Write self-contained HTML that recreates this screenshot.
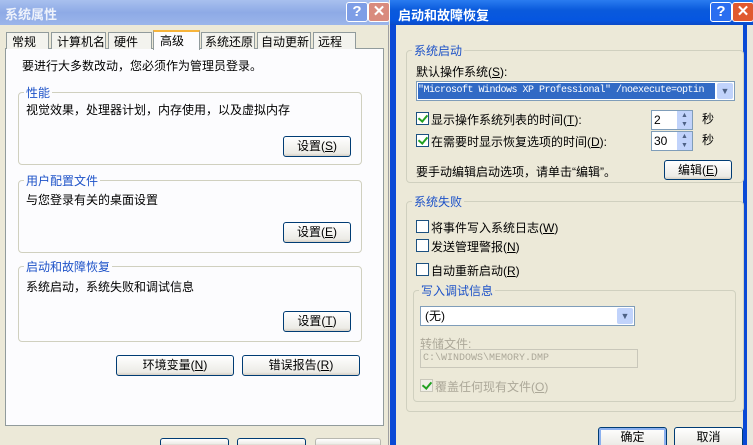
<!DOCTYPE html>
<html><head><meta charset="utf-8"><style>
*{box-sizing:border-box;margin:0;padding:0}
html,body{width:753px;height:445px;overflow:hidden}
body{background:#ece9d8;font-family:"Liberation Sans","Noto Sans CJK SC","WenQuanYi Zen Hei",sans-serif;font-size:12px;color:#000;position:relative}
.a{position:absolute;white-space:nowrap}
.btn{position:absolute;border:1px solid #003c74;border-radius:3px;background:linear-gradient(#fff,#ecebe6 85%,#d6d0c5);text-align:center;font-size:12px;line-height:18px}
.grp{position:absolute;border:1px solid #d0d0bf;border-radius:4px}
.gl{position:absolute;color:#1d52c8;background:inherit;padding:0 2px;font-size:12px;top:-9px;left:5px}
.cb{position:absolute;width:13px;height:13px;border:1px solid #1c5180;background:#fff}
.cb.on::after{content:"";position:absolute;left:3px;top:0px;width:4px;height:7px;border:solid #21a121;border-width:0 2px 2px 0;transform:rotate(40deg)}
.tb{position:absolute;width:22px;height:20px;border:1px solid #fff;border-radius:3px;color:#fff;font-weight:bold;text-align:center;line-height:18px;font-size:15px}
</style></head><body>
<div class="a" style="left:0;top:0;width:389px;height:445px;background:#ece9d8;border-right:1px solid #a0a0a0"></div>
<div class="a" style="left:0;top:0;width:389px;height:25px;background:linear-gradient(#a8c0ee,#8eaae6 50%,#9bb5ea)"></div>
<div class="a" style="left:5px;top:4px;color:#eef2fb;font-size:13px;font-weight:bold">系统属性</div>
<div class="tb" style="left:346px;top:2px;background:#7e9ee6">?</div>
<div class="tb" style="left:368px;top:2px;background:#d98b7e">✕</div>
<div class="a" style="left:5px;top:48px;width:379px;height:378px;background:#fcfcfe;border:1px solid #919b9c"></div>
<div class="a" style="left:6px;top:32px;width:43px;height:17px;border:1px solid #919b9c;border-bottom:0;background:#f3f3ee;padding-left:5px">常规</div>
<div class="a" style="left:51px;top:32px;width:55px;height:17px;border:1px solid #919b9c;border-bottom:0;background:#f3f3ee;padding-left:5px">计算机名</div>
<div class="a" style="left:108px;top:32px;width:44px;height:17px;border:1px solid #919b9c;border-bottom:0;background:#f3f3ee;padding-left:5px">硬件</div>
<div class="a" style="left:153px;top:30px;width:47px;height:20px;border:1px solid #919b9c;border-top:2px solid #f7b43b;border-bottom:0;background:#fcfcfe;padding-left:6px">高级</div>
<div class="a" style="left:201px;top:32px;width:54px;height:17px;border:1px solid #919b9c;border-bottom:0;background:#f3f3ee;padding-left:3px">系统还原</div>
<div class="a" style="left:257px;top:32px;width:54px;height:17px;border:1px solid #919b9c;border-bottom:0;background:#f3f3ee;padding-left:3px">自动更新</div>
<div class="a" style="left:313px;top:32px;width:43px;height:17px;border:1px solid #919b9c;border-bottom:0;background:#f3f3ee;padding-left:4px">远程</div>
<div class="a" style="left:22px;top:57px">要进行大多数改动，您必须作为管理员登录。</div>
<div class="grp" style="left:18px;top:92px;width:344px;height:73px;background:#fcfcfe"><span class="gl">性能</span></div>
<div class="a" style="left:26px;top:101px">视觉效果，处理器计划，内存使用，以及虚拟内存</div>
<div class="btn" style="left:283px;top:136px;width:68px;height:21px">设置(<u>S</u>)</div>
<div class="grp" style="left:18px;top:180px;width:344px;height:73px;background:#fcfcfe"><span class="gl">用户配置文件</span></div>
<div class="a" style="left:26px;top:191px">与您登录有关的桌面设置</div>
<div class="btn" style="left:283px;top:222px;width:68px;height:21px">设置(<u>E</u>)</div>
<div class="grp" style="left:18px;top:266px;width:344px;height:76px;background:#fcfcfe"><span class="gl">启动和故障恢复</span></div>
<div class="a" style="left:26px;top:278px">系统启动，系统失败和调试信息</div>
<div class="btn" style="left:283px;top:311px;width:68px;height:21px">设置(<u>T</u>)</div>
<div class="btn" style="left:116px;top:355px;width:118px;height:21px">环境变量(<u>N</u>)</div>
<div class="btn" style="left:242px;top:355px;width:118px;height:21px">错误报告(<u>R</u>)</div>
<div class="btn" style="left:160px;top:438px;width:69px;height:7px;border-bottom:0;border-radius:3px 3px 0 0"></div>
<div class="btn" style="left:237px;top:438px;width:69px;height:7px;border-bottom:0;border-radius:3px 3px 0 0"></div>
<div class="btn" style="left:315px;top:438px;width:66px;height:7px;border-bottom:0;border-radius:3px 3px 0 0;border-color:#b8b8b0"></div>
<!-- right window -->
<div class="a" style="left:390px;top:0;width:357px;height:445px;background:#0a49d6"></div>
<div class="a" style="left:747px;top:0;width:6px;height:445px;background:#e8e6dc"></div>
<div class="a" style="left:396px;top:25px;width:347px;height:420px;background:#ece9d8"></div>
<div class="a" style="left:390px;top:0;width:363px;height:25px;background:linear-gradient(#2a7cf0,#0a5adc 40%,#0656e0 80%,#0b4ac8)"></div>
<div class="a" style="left:398px;top:5px;color:#fff;font-size:13px;font-weight:bold">启动和故障恢复</div>
<div class="tb" style="left:710px;top:2px;background:#2a6ef0">?</div>
<div class="tb" style="left:732px;top:2px;background:#e05a30">✕</div>
<div class="grp" style="left:406px;top:50px;width:338px;height:133px;background:#ece9d8"><span class="gl">系统启动</span></div>
<div class="a" style="left:416px;top:63px">默认操作系统(<u>S</u>):</div>
<div class="a" style="left:416px;top:81px;width:319px;height:20px;background:#fff;border:1px solid #7f9db9"></div>
<div class="a" style="left:418px;top:83px;width:297px;height:16px;background:#316ac5;color:#fff;font-family:'Liberation Mono',monospace;font-size:10px;line-height:16px;overflow:hidden;letter-spacing:-0.5px">"Microsoft Windows XP Professional" /noexecute=optin</div>
<div class="a" style="left:717px;top:83px;width:16px;height:16px;background:#c1d3fb;border-radius:2px;color:#4d6185;font-size:9px;text-align:center;line-height:16px">▼</div>
<div class="cb on" style="left:416px;top:112px"></div>
<div class="a" style="left:431px;top:111px">显示操作系统列表的时间(<u>T</u>):</div>
<div class="cb on" style="left:416px;top:134px"></div>
<div class="a" style="left:431px;top:133px">在需要时显示恢复选项的时间(<u>D</u>):</div>
<div class="a" style="left:651px;top:110px;width:42px;height:20px;background:#fff;border:1px solid #7f9db9;padding-left:2px;line-height:18px">2</div>
<div class="a" style="left:677px;top:111px;width:15px;height:18px;background:#c1d3fb;color:#4d6185;font-size:7px;text-align:center;line-height:9px">▲<br>▼</div>
<div class="a" style="left:651px;top:131px;width:42px;height:20px;background:#fff;border:1px solid #7f9db9;padding-left:2px;line-height:18px">30</div>
<div class="a" style="left:677px;top:132px;width:15px;height:18px;background:#c1d3fb;color:#4d6185;font-size:7px;text-align:center;line-height:9px">▲<br>▼</div>
<div class="a" style="left:702px;top:110px">秒</div>
<div class="a" style="left:702px;top:131px">秒</div>
<div class="a" style="left:416px;top:163px">要手动编辑启动选项，请单击“编辑”。</div>
<div class="btn" style="left:664px;top:160px;width:68px;height:20px">编辑(<u>E</u>)</div>
<div class="grp" style="left:406px;top:201px;width:338px;height:211px;background:#ece9d8"><span class="gl">系统失败</span></div>
<div class="cb" style="left:416px;top:220px"></div>
<div class="a" style="left:431px;top:219px">将事件写入系统日志(<u>W</u>)</div>
<div class="cb" style="left:416px;top:239px"></div>
<div class="a" style="left:431px;top:238px">发送管理警报(<u>N</u>)</div>
<div class="cb" style="left:416px;top:263px"></div>
<div class="a" style="left:431px;top:262px">自动重新启动(<u>R</u>)</div>
<div class="grp" style="left:413px;top:290px;width:323px;height:112px;background:#ece9d8"><span class="gl">写入调试信息</span></div>
<div class="a" style="left:420px;top:306px;width:215px;height:20px;background:#fff;border:1px solid #7f9db9;padding-left:4px;line-height:18px">(无)</div>
<div class="a" style="left:617px;top:308px;width:16px;height:16px;background:#c1d3fb;border-radius:2px;color:#4d6185;font-size:9px;text-align:center;line-height:16px">▼</div>
<div class="a" style="left:420px;top:335px;color:#aca899">转储文件:</div>
<div class="a" style="left:420px;top:349px;width:218px;height:19px;border:1px solid #c9c7ba;color:#aca899;font-family:'Liberation Mono',monospace;font-size:10px;line-height:17px;padding-left:2px">C:\WINDOWS\MEMORY.DMP</div>
<div class="cb on" style="left:420px;top:379px;border-color:#cac8bb;background:#f0efe8"></div>
<div class="a" style="left:435px;top:378px;color:#aca899">覆盖任何现有文件(<u>O</u>)</div>
<div class="btn" style="left:598px;top:427px;width:69px;height:22px;border-color:#003c74;box-shadow:inset 0 0 0 2px #8bb0ef">确定</div>
<div class="btn" style="left:674px;top:427px;width:69px;height:22px">取消</div>
</body></html>
